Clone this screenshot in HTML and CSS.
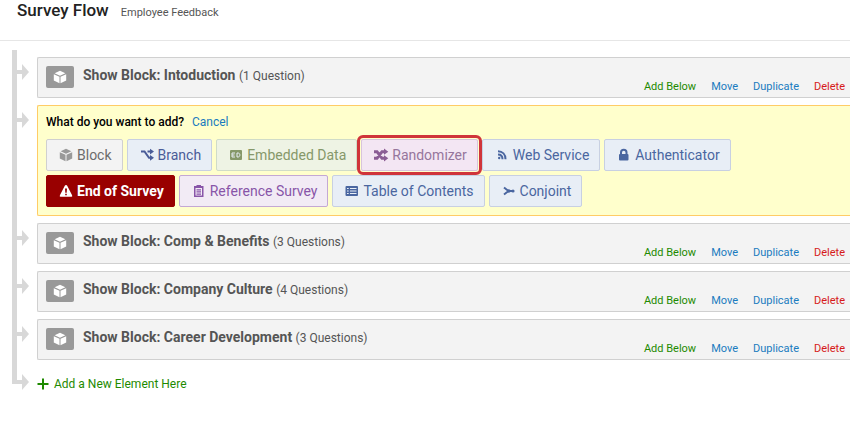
FILE: index.html
```html
<!DOCTYPE html>
<html lang="en">
<head>
<meta charset="utf-8">
<title>Survey Flow</title>
<link rel="stylesheet" href="styles.css">
</head>
<body>
<svg class="defs" aria-hidden="true">
  <symbol id="arrow" viewBox="0 0 12 16"><path d="M0 6h5V0l7 8-7 8v-6H0z"/></symbol>
  <symbol id="cube" viewBox="0 0 14 14"><path d="M7 .8l5.400 2.400L7 5.700 1.600 3.200zM.8 4.200l5.700 2.600v6.400L.8 10.500zM13.200 4.200L7.500 6.800v6.400l5.700-2.700z"/></symbol>
</svg>
<header class="header">
  <h1 class="header-title">Survey Flow</h1>
  <span class="header-name">Employee Feedback</span>
</header>
<main>
  <ul class="flow">
    <li class="node">
      <svg class="arrow" aria-hidden="true"><use href="#arrow"/></svg>
      <section class="block">
        <span class="badge"><svg class="cube" aria-hidden="true"><use href="#cube"/></svg></span>
        <h2 class="block-title">Show Block: Intoduction <span class="count">(1 Question)</span></h2>
        <nav class="actions"><a class="add" href="#">Add Below</a><a href="#">Move</a><a href="#">Duplicate</a><a class="delete" href="#">Delete</a></nav>
      </section>
    </li>
    <li class="node">
      <svg class="arrow" aria-hidden="true"><use href="#arrow"/></svg>
      <section class="picker">
        <div class="picker-head"><strong>What do you want to add?</strong><a href="#">Cancel</a></div>
        <div class="choices">
          <button class="choice plain" type="button"><svg class="icon" viewBox="0 0 16 14"><path d="M8 .8l5.400 2.400L8 5.700 2.600 3.200zM1.800 4.200l5.700 2.600v6.400l-5.700-2.700zM14.200 4.200L8.500 6.800v6.400l5.700-2.700z"/></svg>Block</button>
          <button class="choice branch" type="button"><svg class="icon" viewBox="0 0 16 14"><path class="line" d="M2 3.500h3.500l4.500 6.300h2M8.500 3.500H12"/><path d="M11 .8L15 3.600 11 6.400zM11 7l4 2.800-4 2.900z"/></svg>Branch</button>
          <button class="choice green" type="button"><svg class="icon" viewBox="0 0 16 14"><rect x="2" y="2" width="12" height="10" rx="1"/><path class="cut" d="M7 5H4v4h3M4 7h2.500M9 5v4h1c2.500 0 2.500-4 0-4z"/></svg>Embedded Data</button>
          <button class="choice pink marked" type="button"><svg class="icon" viewBox="0 0 16 14"><path class="line heavy" d="M1 3.700h3l5 6.600h3M1 10.300h3L9 3.700h3"/><path d="M11 .6l4.300 3.100L11 6.800zM11 7.200l4.300 3.100-4.300 3.100z"/></svg>Randomizer</button>
          <button class="choice" type="button"><svg class="icon" viewBox="0 0 16 14"><circle cx="5.200" cy="10" r="1.200"/><path class="line" d="M4 6.500c3 0 4.500 2 4.500 4.700M4 3.300c4.500 0 7.500 3.300 7.500 7.900"/></svg>Web Service</button>
          <button class="choice" type="button"><svg class="icon" viewBox="0 0 16 14"><rect x="3" y="6" width="9.500" height="6.500" rx="1"/><path class="line" d="M5 6.500V4.600a2.700 2.700 0 0 1 5.500 0v1.900"/></svg>Authenticator</button>
          <button class="choice red" type="button"><svg class="icon" viewBox="0 0 16 14"><path fill-rule="evenodd" d="M8 1q.8 0 1.200.8l4.900 9.400q.6 1.500-.8 1.600H2.700q-1.400-.1-.8-1.600L6.800 1.800Q7.200 1 8 1zM7 4.500l.3 4.300h1.400L9 4.500zm.2 5.300v1.500h1.600V9.800z"/></svg>End of Survey</button>
          <button class="choice purple" type="button"><svg class="icon" viewBox="0 0 16 14"><path fill-rule="evenodd" d="M3 2h2.500V1H10v1h2.500v11H3zm1.500 2v7.500H11V4zM5.500 5.200H10v1.300H5.500zm0 2.100H10v1.300H5.500zm0 2.100H10v1.300H5.500z"/></svg>Reference Survey</button>
          <button class="choice" type="button"><svg class="icon" viewBox="0 0 16 14"><rect x="1.500" y="2" width="12.500" height="10" rx="1"/><path class="cut" d="M3 4.500h1.700M6 4.500h6.500M3 7h1.700M6 7h6.500M3 9.500h1.700M6 9.500h6.500"/></svg>Table of Contents</button>
          <button class="choice" type="button"><svg class="icon" viewBox="0 0 16 14"><path class="line" d="M3 3.500L7.500 7 3 10.500M7 7h5"/><circle cx="7.800" cy="7" r="1.800"/><circle cx="12" cy="7" r="1.600"/></svg>Conjoint</button>
        </div>
      </section>
    </li>
    <li class="node">
      <svg class="arrow" aria-hidden="true"><use href="#arrow"/></svg>
      <section class="block">
        <span class="badge"><svg class="cube" aria-hidden="true"><use href="#cube"/></svg></span>
        <h2 class="block-title">Show Block: Comp &amp; Benefits <span class="count">(3 Questions)</span></h2>
        <nav class="actions"><a class="add" href="#">Add Below</a><a href="#">Move</a><a href="#">Duplicate</a><a class="delete" href="#">Delete</a></nav>
      </section>
    </li>
    <li class="node">
      <svg class="arrow" aria-hidden="true"><use href="#arrow"/></svg>
      <section class="block">
        <span class="badge"><svg class="cube" aria-hidden="true"><use href="#cube"/></svg></span>
        <h2 class="block-title">Show Block: Company Culture <span class="count">(4 Questions)</span></h2>
        <nav class="actions"><a class="add" href="#">Add Below</a><a href="#">Move</a><a href="#">Duplicate</a><a class="delete" href="#">Delete</a></nav>
      </section>
    </li>
    <li class="node">
      <svg class="arrow" aria-hidden="true"><use href="#arrow"/></svg>
      <section class="block">
        <span class="badge"><svg class="cube" aria-hidden="true"><use href="#cube"/></svg></span>
        <h2 class="block-title">Show Block: Career Development <span class="count">(3 Questions)</span></h2>
        <nav class="actions"><a class="add" href="#">Add Below</a><a href="#">Move</a><a href="#">Duplicate</a><a class="delete" href="#">Delete</a></nav>
      </section>
    </li>
    <li class="node">
      <svg class="arrow" aria-hidden="true"><use href="#arrow"/></svg>
      <a class="new-element" href="#"><svg class="plus" viewBox="0 0 12 12" aria-hidden="true"><path d="M6 .5v11M.5 6h11"/></svg>Add a New Element Here</a>
    </li>
  </ul>
</main>
</body>
</html>
```
FILE: styles.css
```css
* {
  box-sizing: border-box;
}

body {
  min-height: 100vh;
  margin: 0;
  background: #fff;
  color: #555;
  font-family: Roboto, "Liberation Sans", sans-serif;
  font-size: 12px;
  line-height: 16px;
}

a {
  color: #1a7bbf;
  text-decoration: none;
}

.defs {
  display: none;
}

.header {
  display: flex;
  align-items: baseline;
  gap: 12px;
  padding: 0 17px 19px;
  border-bottom: 1px solid #e6e6e6;
}

.header-title {
  margin: 0;
  color: #222;
  font-size: 17px;
  font-weight: 500;
  line-height: 20px;
}

.header-name {
  font-size: 11px;
}

.flow {
  margin: 0;
  padding: 9px 0 0 12px;
  list-style: none;
}

/* Each node paints its own stretch of the rail; the last one stops at its arrow. */
.node {
  display: flex;
  align-items: flex-start;
  padding: 7px 0 0 5px;
  background: linear-gradient(#d8d8d8, #d8d8d8) no-repeat left top / 5px 100%;
}

.node:last-child {
  background-size: 5px 24px;
}

.arrow {
  flex: none;
  width: 12px;
  height: 16px;
  margin: 7px 8px 0 0;
  fill: #d8d8d8;
}

.block {
  display: flex;
  flex: 1;
  align-items: flex-start;
  min-height: 41px;
  padding: 8px 5px 2px 8px;
  border: 1px solid #d0d0d0;
  border-right: 0;
  border-radius: 2px 0 0 2px;
  background: #f3f3f3;
}

.badge {
  display: flex;
  align-items: center;
  justify-content: center;
  width: 28px;
  height: 22px;
  border-radius: 2px;
  background: #999;
}

.cube {
  width: 14px;
  height: 14px;
  fill: #fff;
}

.block-title {
  flex: 1;
  margin: 0 0 0 9px;
  font-size: 14px;
  font-weight: 700;
  line-height: 18px;
}

.count {
  font-size: 12px;
  font-weight: 400;
}

.actions {
  display: flex;
  align-self: flex-end;
  gap: 15px;
  font-size: 11px;
}

.add,
.new-element {
  color: #1e8a00;
}

.delete {
  color: #d61a1a;
}

.picker {
  flex: 1;
  padding: 8px;
  border: 1px solid #fc6;
  border-right: 0;
  border-radius: 2px 0 0 2px;
  background: #ffc;
}

.picker-head {
  display: flex;
  gap: 8px;
  margin-bottom: 9px;
  color: #000;
}

.picker-head strong {
  font-weight: 500;
}

.choices {
  display: flex;
  flex-wrap: wrap;
  gap: 4px;
}

.choice {
  display: flex;
  align-items: center;
  height: 32px;
  padding: 0 10px 0 11px;
  border: 1px solid #c8d0e2;
  border-radius: 2px;
  background: #e8eef6;
  color: #4a66a0;
  font: inherit;
  font-size: 14px;
}

.icon {
  width: 16px;
  height: 14px;
  margin-right: 3px;
  fill: currentColor;
}

.icon .line {
  fill: none;
  stroke: currentColor;
  stroke-width: 2;
}

.icon .heavy {
  stroke-width: 3;
}

.icon .cut {
  fill: none;
  stroke: #e8eef6;
  stroke-width: 1;
}

.plain {
  border-color: #d0d0d0;
  background: #f3f3f3;
  color: #6c6c6c;
}

.plain .icon {
  fill: #999;
}

.branch {
  color: #4a5c98;
}

.green {
  border-color: #d0dcc8;
  background: #eef3e4;
  color: #86986a;
}

.pink {
  border-color: #d8c4dc;
  background: #f3e6f3;
  color: #96769c;
}

.pink .icon {
  color: #8a5c94;
}

.marked {
  outline: 3px solid #d0343a;
  outline-offset: 1px;
}

.red {
  border-color: #900;
  background: #900;
  color: #fff;
  font-weight: 700;
}

.purple {
  border-color: #c4a8d4;
  background: #f2ebf5;
  color: #8855a8;
}

.new-element {
  display: flex;
  align-items: center;
  gap: 5px;
  margin-top: 9px;
}

.plus {
  width: 12px;
  height: 12px;
  stroke: currentColor;
  stroke-width: 2;
}
```
